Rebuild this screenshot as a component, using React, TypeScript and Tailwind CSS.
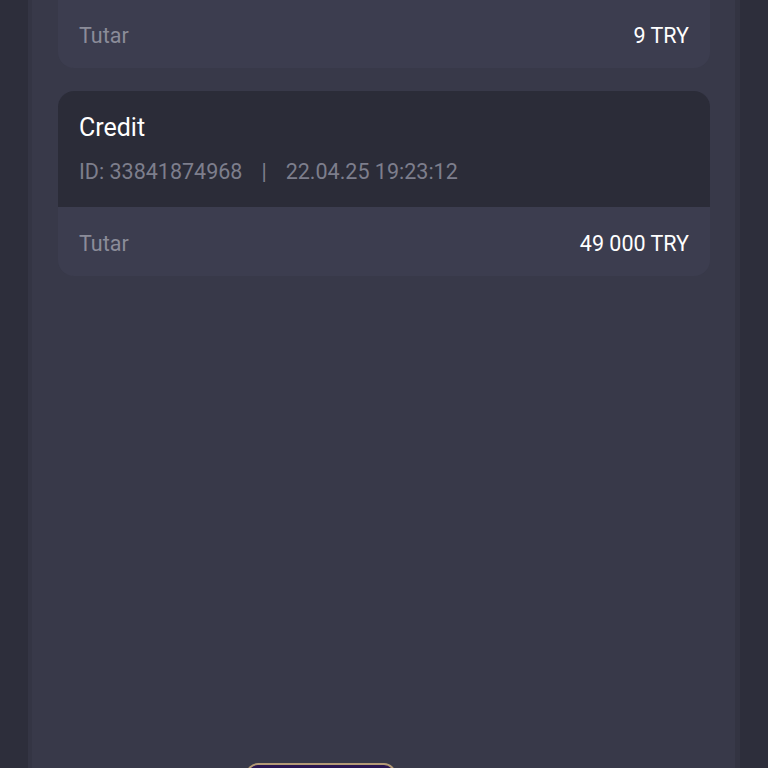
import React from "react";

function Card({ title, id, date, amount }: { title: string; id: string; date: string; amount: string }) {
  return (
    <div className="rounded-[16px] overflow-hidden bg-[#3c3d4f]">
      <div className="bg-[#2b2c38] px-[21px] pt-[22px] pb-[19px] h-[116px]">
        <div className="text-[25px] leading-[30px] text-white">{title}</div>
        <div className="mt-[15px] text-[21.5px] leading-[28px] text-[#7d7e8c] flex items-center">
          <span>ID: {id}</span>
          <span className="mx-[19px]">|</span>
          <span>{date}</span>
        </div>
      </div>
      <div className="h-[69px] pt-[5px] px-[21px] flex items-center justify-between">
        <span className="text-[21.5px] text-[#8b8c99]">Tutar</span>
        <span className="text-[21.5px] text-white">{amount}</span>
      </div>
    </div>
  );
}

export default function App() {
  return (
    <div
      className="relative h-[768px] overflow-hidden bg-[#2d2e3b] flex justify-start"
      style={{ fontFamily: "Roboto, 'Noto Sans', sans-serif" }}
    >
      <div className="ml-[28px] w-[712px] h-full bg-[#383949] border-l-[4px] border-[#343544] border-r-[5px] border-r-[#333442] pl-[26px] pr-[25px]">
        <div className="-mt-[117px] flex flex-col gap-[23px]">
          <Card title="Credit" id="33841874968" date="22.04.25 19:20:01" amount="9 TRY" />
          <Card title="Credit" id="33841874968" date="22.04.25 19:23:12" amount="49 000 TRY" />
        </div>
      </div>
      <div className="absolute left-[246px] top-[763px] w-[150px] h-[40px] rounded-[12px] border-[2px] border-[#b39a76] bg-[#2a1650]" />
    </div>
  );
}
